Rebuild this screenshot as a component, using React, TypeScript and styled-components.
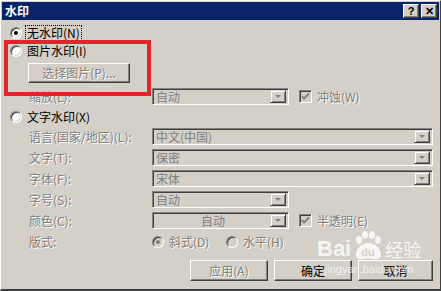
import styled, { createGlobalStyle } from 'styled-components'

const Global = createGlobalStyle`
  html, body { margin: 0; padding: 0; background: #d4d0c8; }
  body { font-family: "Noto Sans CJK SC", "Liberation Sans", sans-serif; font-size: 12px; }
`

const Win = styled.div`
  position: relative;
  width: 441px;
  height: 291px;
  box-sizing: border-box;
  background: #d4d0c8;
  border-style: solid;
  border-width: 1px 1px 2px 1px;
  border-color: #ffffff #404040 #404040 #ffffff;
  overflow: hidden;
`

const TitleBar = styled.div`
  height: 18px;
  margin: 1px 1px 0 1px;
  background: #0a246a;
  display: flex;
  align-items: center;
  padding: 0 2px 0 3px;
`

const Title = styled.div`
  flex: 1;
  color: #fff;
  font-weight: bold;
  font-size: 12px;
  line-height: 18px;
`

const TitleBtn = styled.div<{ $gap?: number }>`
  width: 16px;
  height: 14px;
  box-sizing: border-box;
  margin-left: ${(p) => p.$gap ?? 0}px;
  background: #d4d0c8;
  border-style: solid;
  border-width: 1px;
  border-color: #fff #404040 #404040 #fff;
  box-shadow: inset -1px -1px 0 #808080;
  display: flex;
  align-items: center;
  justify-content: center;
  font-family: "Liberation Sans", sans-serif;
  font-weight: bold;
  font-size: 11px;
  line-height: 12px;
  color: #000;
`

const Body = styled.div`
  display: flex;
  flex-direction: column;
  gap: 4px;
  padding: 6px 0 0 0;
`

const Row = styled.div<{ $mt?: number; $indent?: number; $h?: number }>`
  display: flex;
  align-items: center;
  height: ${(p) => p.$h ?? (p.$indent === undefined ? 14 : 17)}px;
  margin-top: ${(p) => p.$mt ?? 0}px;
  padding-left: ${(p) => p.$indent ?? 9}px;
`

const Label = styled.span<{ $dis?: boolean; $w?: number; $focus?: boolean }>`
  display: inline-block;
  width: ${(p) => (p.$w ? `${p.$w}px` : 'auto')};
  color: ${(p) => (p.$dis ? '#808080' : '#000')};
  text-shadow: ${(p) => (p.$dis ? '1px 1px 0 #fff' : 'none')};
  line-height: 14px;
  white-space: nowrap;
  outline: ${(p) => (p.$focus ? '1px dotted #000' : 'none')};
  padding: 0 1px;
`

const RadioDot = styled.span<{ $on?: boolean; $dis?: boolean }>`
  position: relative;
  width: 12px;
  height: 12px;
  box-sizing: border-box;
  border-radius: 50%;
  margin-right: 4px;
  flex: none;
  background: ${(p) => (p.$dis ? '#d4d0c8' : '#fff')};
  border: 1px solid;
  border-color: #808080 #fff #fff #808080;
  box-shadow: inset 1px 1px 0 #404040, inset -1px -1px 0 #d4d0c8;
  &::after {
    content: '';
    display: ${(p) => (p.$on ? 'block' : 'none')};
    position: absolute;
    left: 3px;
    top: 3px;
    width: 4px;
    height: 4px;
    border-radius: 50%;
    background: ${(p) => (p.$dis ? '#808080' : '#000')};
  }
`

const Check = styled.span`
  width: 13px;
  height: 13px;
  box-sizing: border-box;
  flex: none;
  margin: 0 4px 0 10px;
  background: #d4d0c8;
  border: 1px solid;
  border-color: #808080 #fff #fff #808080;
  box-shadow: inset 1px 1px 0 #404040;
  display: flex;
  align-items: center;
  justify-content: center;
`

const Combo = styled.div<{ $w: number }>`
  width: ${(p) => p.$w}px;
  height: 17px;
  box-sizing: border-box;
  flex: none;
  border: 1px solid;
  border-color: #808080 #fff #fff #808080;
  box-shadow: inset 1px 1px 0 #404040, inset -1px -1px 0 #d4d0c8;
  display: flex;
  align-items: center;
  padding: 1px 2px 2px 2px;
  color: #808080;
`

const ComboText = styled.span<{ $center?: boolean }>`
  flex: 1;
  text-align: ${(p) => (p.$center ? 'center' : 'left')};
  line-height: 13px;
  padding-left: 1px;
`

const Arrow = styled.span`
  width: 16px;
  height: 13px;
  box-sizing: border-box;
  flex: none;
  border: 1px solid;
  border-color: #d4d0c8 #404040 #404040 #d4d0c8;
  box-shadow: inset 1px 1px 0 #fff, inset -1px -1px 0 #808080;
  display: flex;
  align-items: center;
  justify-content: center;
  &::after {
    content: '';
    border-left: 3px solid transparent;
    border-right: 3px solid transparent;
    border-top: 3px solid #808080;
    margin-top: 1px;
  }
`

const Btn = styled.div<{ $w: number; $h?: number; $dis?: boolean }>`
  width: ${(p) => p.$w}px;
  height: ${(p) => p.$h ?? 21}px;
  box-sizing: border-box;
  flex: none;
  border: 1px solid;
  border-color: #fff #404040 #404040 #fff;
  box-shadow: inset -1px -1px 0 #808080;
  display: flex;
  align-items: center;
  justify-content: center;
  color: ${(p) => (p.$dis ? '#808080' : '#000')};
  text-shadow: ${(p) => (p.$dis ? '1px 1px 0 #fff' : 'none')};
  line-height: 14px;
`

const Footer = styled.div`
  display: flex;
  justify-content: flex-end;
  gap: 6px;
  padding-right: 7px;
  margin-top: 6px;
`

const RedBox = styled.div`
  position: absolute;
  left: 3px;
  top: 39px;
  width: 147px;
  height: 56px;
  box-sizing: border-box;
  border: 4px solid #e3242b;
`

const Watermark = styled.div`
  position: absolute;
  left: 316px;
  top: 230px;
  color: rgba(255, 255, 255, 0.8);
  display: flex;
  flex-direction: column;
  align-items: center;
  font-family: "Liberation Sans", sans-serif;
  pointer-events: none;
`

const WmTop = styled.div`
  display: flex;
  align-items: flex-end;
  font-size: 22px;
  font-weight: bold;
  line-height: 24px;
`

const WmCn = styled.span`
  font-family: "Noto Sans CJK SC", sans-serif;
  font-size: 18px;
  font-weight: normal;
`

const WmSub = styled.div`
  font-size: 11px;
  line-height: 13px;
  margin-top: 2px;
  color: rgba(255, 255, 255, 0.7);
`

const Tick = () => (
  <svg width="9" height="9" viewBox="0 0 9 9">
    <path d="M1 4 L3 6.5 L8 1.5" stroke="#808080" strokeWidth="2" fill="none" />
  </svg>
)

const Paw = () => (
  <svg width="34" height="30" viewBox="0 0 34 30">
    <g fill="rgba(255,255,255,0.8)">
      <ellipse cx="8" cy="9" rx="3" ry="4" />
      <ellipse cx="14" cy="4" rx="3" ry="4" />
      <ellipse cx="21" cy="4" rx="3" ry="4" />
      <ellipse cx="27" cy="9" rx="3" ry="4" />
      <path d="M5 24 C5 16 12 12 17 12 C23 12 30 16 30 24 C30 29 24 29 17 27 C10 29 5 29 5 24 Z" />
    </g>
    <text x="17" y="25" textAnchor="middle" fontSize="11" fontWeight="bold" fill="#d4d0c8" fontFamily="Liberation Sans, sans-serif">du</text>
  </svg>
)

export default function App() {
  return (
    <>
      <Global />
      <Win>
        <TitleBar>
          <Title>水印</Title>
          <TitleBtn>?</TitleBtn>
          <TitleBtn $gap={2}>✕</TitleBtn>
        </TitleBar>
        <Body>
          <Row>
            <RadioDot $on />
            <Label $focus>无水印(N)</Label>
          </Row>
          <Row>
            <RadioDot />
            <Label>图片水印(I)</Label>
          </Row>
          <Row $indent={27} $h={20} $mt={1}>
            <Btn $w={102} $h={20} $dis>选择图片(P)...</Btn>
          </Row>
          <Row $indent={27} $mt={1}>
            <Label $dis $w={122}>缩放(L):</Label>
            <Combo $w={137}>
              <ComboText>自动</ComboText>
              <Arrow />
            </Combo>
            <Check><Tick /></Check>
            <Label $dis>冲蚀(W)</Label>
          </Row>
          <Row $mt={1}>
            <RadioDot />
            <Label>文字水印(X)</Label>
          </Row>
          <Row $indent={27}>
            <Label $dis $w={122}>语言(国家/地区)(L):</Label>
            <Combo $w={281}>
              <ComboText>中文(中国)</ComboText>
              <Arrow />
            </Combo>
          </Row>
          <Row $indent={27}>
            <Label $dis $w={122}>文字(T):</Label>
            <Combo $w={281}>
              <ComboText>保密</ComboText>
              <Arrow />
            </Combo>
          </Row>
          <Row $indent={27}>
            <Label $dis $w={122}>字体(F):</Label>
            <Combo $w={281}>
              <ComboText>宋体</ComboText>
              <Arrow />
            </Combo>
          </Row>
          <Row $indent={27}>
            <Label $dis $w={122}>字号(S):</Label>
            <Combo $w={137}>
              <ComboText>自动</ComboText>
              <Arrow />
            </Combo>
          </Row>
          <Row $indent={27}>
            <Label $dis $w={122}>颜色(C):</Label>
            <Combo $w={137}>
              <ComboText $center>自动</ComboText>
              <Arrow />
            </Combo>
            <Check><Tick /></Check>
            <Label $dis>半透明(E)</Label>
          </Row>
          <Row $indent={27}>
            <Label $dis $w={122}>版式:</Label>
            <RadioDot $on $dis />
            <Label $dis $w={56}>斜式(D)</Label>
            <RadioDot $dis />
            <Label $dis>水平(H)</Label>
          </Row>
          <Footer>
            <Btn $w={78} $dis>应用(A)</Btn>
            <Btn $w={78}>确定</Btn>
            <Btn $w={75}>取消</Btn>
          </Footer>
        </Body>
        <RedBox />
        <Watermark>
          <WmTop>
            <span>Bai</span>
            <Paw />
            <WmCn>经验</WmCn>
          </WmTop>
          <WmSub>jingyan.baidu.com</WmSub>
        </Watermark>
      </Win>
    </>
  )
}
